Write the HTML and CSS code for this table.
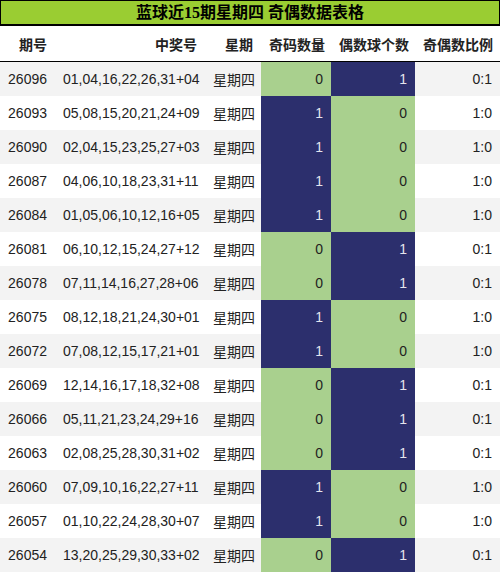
FILE: index.html
```html
<!DOCTYPE html>
<html lang="zh-CN">
  <head>
    <meta charset="UTF-8" />
    <meta name="viewport" content="width=device-width, initial-scale=1.0" />
    <title>蓝球近15期星期四 奇偶数据表格</title>
    <link rel="stylesheet" href="styles.css">
  </head>
  <body>
    <div class="title">蓝球近15期星期四 奇偶数据表格</div>
    <table class="odd-even">
      <colgroup>
        <col class="c-issue" />
        <col class="c-nums" />
        <col class="c-week" />
        <col class="c-odd" />
        <col class="c-even" />
        <col class="c-ratio" />
      </colgroup>
      <thead>
        <tr>
          <th>期号</th>
          <th>中奖号</th>
          <th>星期</th>
          <th>奇码数量</th>
          <th>偶数球个数</th>
          <th>奇偶数比例</th>
        </tr>
      </thead>
      <tbody id="rows"></tbody>
    </table>

    <script type="text/javascript">
      // 期号, 中奖号, 蓝球是否为奇数
      let data = [
        ["26096", "01,04,16,22,26,31+04", 0],
        ["26093", "05,08,15,20,21,24+09", 1],
        ["26090", "02,04,15,23,25,27+03", 1],
        ["26087", "04,06,10,18,23,31+11", 1],
        ["26084", "01,05,06,10,12,16+05", 1],
        ["26081", "06,10,12,15,24,27+12", 0],
        ["26078", "07,11,14,16,27,28+06", 0],
        ["26075", "08,12,18,21,24,30+01", 1],
        ["26072", "07,08,12,15,17,21+01", 1],
        ["26069", "12,14,16,17,18,32+08", 0],
        ["26066", "05,11,21,23,24,29+16", 0],
        ["26063", "02,08,25,28,30,31+02", 0],
        ["26060", "07,09,10,16,22,27+11", 1],
        ["26057", "01,10,22,24,28,30+07", 1],
        ["26054", "13,20,25,29,30,33+02", 0],
      ];

      const tbody = document.querySelector("#rows");
      const frag = new DocumentFragment();
      data.forEach(function (d) {
        let odd = d[2];
        let even = 1 - odd;
        const tr = document.createElement("tr");
        tr.innerHTML = `<td>${d[0]}</td>
          <td>${d[1]}</td>
          <td>星期四</td>
          <td class="${odd ? "blue" : "green"}">${odd}</td>
          <td class="${even ? "blue" : "green"}">${even}</td>
          <td>${odd}:${even}</td>`;
        frag.appendChild(tr);
      });
      tbody.appendChild(frag);
    </script>
  </body>
</html>
```

FILE: styles.css
```css
body {
  margin: 0px;
  background-color: #ffffff;
  font-family: "Liberation Sans", "Noto Sans CJK SC", sans-serif;
  font-size: 14px;
  color: #222;
}

.title {
  box-sizing: border-box;
  height: 26px;
  line-height: 23px;
  border: 1px solid #000;
  border-bottom-width: 2px;
  background-color: #9acd32;
  text-align: center;
  font-family: "Liberation Serif", "Noto Sans CJK SC", serif;
  font-weight: bold;
  font-size: 16px;
  color: #000;
}

.odd-even {
  width: 500px;
  border-collapse: collapse;
  table-layout: fixed;
}

.c-issue { width: 55px; }
.c-nums { width: 150px; }
.c-week { width: 56px; }
.c-odd { width: 70px; }
.c-even { width: 84px; }
.c-ratio { width: 85px; }

th,
td {
  padding: 0px 8px;
  text-align: right;
  white-space: nowrap;
}

th {
  height: 35px;
  border-bottom: 1px solid #000;
  font-weight: bold;
  color: #222;
}

td {
  height: 34px;
}

tbody tr:nth-child(odd) {
  background-color: #f3f3f3;
}

td.green {
  background-color: #a9d08e;
  color: #222;
}

td.blue {
  background-color: #2c2f6d;
  color: #e4e4ee;
}
```
